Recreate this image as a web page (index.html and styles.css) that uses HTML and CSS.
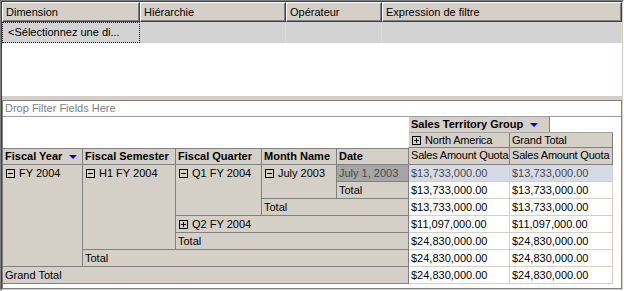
FILE: index.html
```html
<!DOCTYPE html>
<html lang="fr">
<head>
  <meta charset="UTF-8">
  <title>Filtre et tableau croisé</title>
  <link rel="stylesheet" href="styles.css">
</head>
<body>

  <div class="frame">
    <div class="frame-inner">

      <div class="filter-grid">
        <div class="fg-row fg-head">
          <div class="fg-cell c-dim">Dimension</div>
          <div class="fg-cell c-hier">Hiérarchie</div>
          <div class="fg-cell c-op">Opérateur</div>
          <div class="fg-cell c-expr">Expression de filtre</div>
        </div>
        <div class="fg-row fg-data">
          <div class="fg-cell c-dim focus">&lt;Sélectionnez une di...</div>
          <div class="fg-cell c-hier"></div>
          <div class="fg-cell c-op"></div>
          <div class="fg-cell c-expr"></div>
        </div>
      </div>

      <div class="splitter"></div>

      <div class="pivot">
        <div class="drop-filter">Drop Filter Fields Here</div>

        <table class="pt">
          <colgroup>
            <col class="w-year">
            <col class="w-sem">
            <col class="w-qtr">
            <col class="w-month">
            <col class="w-date">
            <col class="w-na">
            <col class="w-gt">
          </colgroup>
          <tr class="r-field">
            <td colspan="5" class="blank"></td>
            <td colspan="2" class="blank field-cell">
              <div class="field-btn">Sales Territory Group <i class="drop"></i></div>
            </td>
          </tr>
          <tr class="r-members">
            <td colspan="5" class="blank"></td>
            <td class="ch"><svg class="xp" viewBox="0 0 9 9"><rect x="0.5" y="0.5" width="8" height="8"/><path d="M2 4.5h5M4.5 2v5"/></svg>North America</td>
            <td class="ch">Grand Total</td>
          </tr>
          <tr class="r-heads">
            <td class="rf">Fiscal Year <i class="drop"></i></td>
            <td class="rf">Fiscal Semester</td>
            <td class="rf">Fiscal Quarter</td>
            <td class="rf">Month Name</td>
            <td class="rf">Date</td>
            <td class="ch">Sales Amount Quota</td>
            <td class="ch">Sales Amount Quota</td>
          </tr>
          <tr>
            <td class="rh" rowspan="6"><svg class="xp" viewBox="0 0 9 9"><rect x="0.5" y="0.5" width="8" height="8"/><path d="M2 4.5h5"/></svg>FY 2004</td>
            <td class="rh" rowspan="5"><svg class="xp" viewBox="0 0 9 9"><rect x="0.5" y="0.5" width="8" height="8"/><path d="M2 4.5h5"/></svg>H1 FY 2004</td>
            <td class="rh" rowspan="3"><svg class="xp" viewBox="0 0 9 9"><rect x="0.5" y="0.5" width="8" height="8"/><path d="M2 4.5h5"/></svg>Q1 FY 2004</td>
            <td class="rh" rowspan="2"><svg class="xp" viewBox="0 0 9 9"><rect x="0.5" y="0.5" width="8" height="8"/><path d="M2 4.5h5"/></svg>July 2003</td>
            <td class="rh sel">July 1, 2003</td>
            <td class="v hl">$13,733,000.00</td>
            <td class="v hl">$13,733,000.00</td>
          </tr>
          <tr>
            <td class="rh">Total</td>
            <td class="v">$13,733,000.00</td>
            <td class="v">$13,733,000.00</td>
          </tr>
          <tr>
            <td class="rh" colspan="2">Total</td>
            <td class="v">$13,733,000.00</td>
            <td class="v">$13,733,000.00</td>
          </tr>
          <tr>
            <td class="rh" colspan="3"><svg class="xp" viewBox="0 0 9 9"><rect x="0.5" y="0.5" width="8" height="8"/><path d="M2 4.5h5M4.5 2v5"/></svg>Q2 FY 2004</td>
            <td class="v">$11,097,000.00</td>
            <td class="v">$11,097,000.00</td>
          </tr>
          <tr>
            <td class="rh" colspan="3">Total</td>
            <td class="v">$24,830,000.00</td>
            <td class="v">$24,830,000.00</td>
          </tr>
          <tr>
            <td class="rh" colspan="4">Total</td>
            <td class="v">$24,830,000.00</td>
            <td class="v">$24,830,000.00</td>
          </tr>
          <tr>
            <td class="rh" colspan="5">Grand Total</td>
            <td class="v">$24,830,000.00</td>
            <td class="v">$24,830,000.00</td>
          </tr>
        </table>
      </div>

    </div>
  </div>

</body>
</html>
```

FILE: styles.css
```css
:root {
  --face: #d4d0c8;
  --shadow: #808080;
  --dark: #404040;
  --line: #a0a0a0;
}

* {
  box-sizing: border-box;
}

body {
  margin: 0;
  font-family: 'Liberation Sans', Arial, sans-serif;
  font-size: 11px;
  color: #000;
  background: #fff;
}

/* sunken outer frame */
.frame {
  width: 624px;
  height: 291px;
  border: 1px solid;
  border-color: var(--shadow) #fff #fff var(--shadow);
}

.frame-inner {
  height: 100%;
  border: 1px solid;
  border-color: var(--dark) var(--face) var(--face) var(--dark);
  display: flex;
  flex-direction: column;
}

/* filter grid */
.filter-grid {
  height: 94px;
  background: #fff;
}

.fg-row {
  display: flex;
}

.fg-cell {
  padding-left: 3px;
  white-space: nowrap;
  overflow: hidden;
}

.c-dim { width: 138px; }
.c-hier { width: 146px; }
.c-op { width: 96px; }
.c-expr { flex: 1; }

.fg-head .fg-cell {
  height: 20px;
  line-height: 19px;
  background: var(--face);
  border-top: 1px solid #fff;
  border-left: 1px solid #fff;
  border-right: 1px solid var(--dark);
  border-bottom: 1px solid var(--dark);
  box-shadow: inset -1px -1px 0 var(--shadow);
}

.fg-data .fg-cell {
  height: 21px;
  line-height: 20px;
  background: #d3d3d3;
  border-right: 1px solid #dcdcdc;
}

.fg-data .focus {
  border: 1px dotted #000;
  line-height: 19px;
  padding-left: 5px;
}

.splitter {
  height: 4px;
  background: var(--face);
}

/* pivot table */
.pivot {
  flex: 1;
  background: #fff;
  border: 1px solid var(--shadow);
}

.drop-filter {
  height: 16px;
  line-height: 15px;
  padding-left: 2px;
  color: var(--shadow);
  border-bottom: 1px solid var(--line);
}

.pt {
  border-collapse: separate;
  border-spacing: 0;
  table-layout: fixed;
  width: 610px;
}

.w-year { width: 80px; }
.w-sem { width: 93px; }
.w-qtr { width: 86px; }
.w-month { width: 75px; }
.w-date { width: 72px; }
.w-na { width: 101px; }
.w-gt { width: 103px; }

.pt td {
  padding: 0 0 0 2px;
  white-space: nowrap;
  overflow: hidden;
  vertical-align: top;
}

.r-field td {
  height: 16px;
}

.r-members td {
  height: 15px;
  line-height: 14px;
}

.r-heads td {
  height: 16px;
  line-height: 15px;
}

.pt td.blank {
  padding: 0;
}

.pt td.field-cell {
  border-bottom: 1px solid var(--line);
}

.field-btn {
  width: 141px;
  height: 15px;
  line-height: 15px;
  padding-left: 2px;
  background: var(--face);
  border-right: 1px solid var(--shadow);
  font-weight: bold;
}

.drop {
  display: inline-block;
  width: 0;
  height: 0;
  margin-left: 4px;
  vertical-align: 1px;
  border-left: 4px solid transparent;
  border-right: 4px solid transparent;
  border-top: 4px solid #0000ff;
}

.ch {
  background: var(--face);
  border-right: 1px solid var(--shadow);
  border-bottom: 1px solid var(--shadow);
  letter-spacing: -0.2px;
}

.rf {
  background: var(--face);
  font-weight: bold;
  border-top: 1px solid var(--shadow);
  border-right: 1px solid var(--shadow);
  border-bottom: 1px solid var(--shadow);
}

.rh {
  height: 17px;
  line-height: 16px;
  background: var(--face);
  border-right: 1px solid var(--shadow);
  border-bottom: 1px solid var(--shadow);
}

.rh.sel {
  background: #a6a6a6;
  color: #4a4a4a;
}

.v {
  height: 17px;
  line-height: 16px;
  border-right: 1px solid var(--face);
  border-bottom: 1px solid var(--face);
}

.v.hl {
  background: #d6dae6;
  color: #4a4a4a;
}

/* expand / collapse box */
.xp {
  display: inline-block;
  width: 9px;
  height: 9px;
  margin: 0 4px 0 1px;
  vertical-align: -1px;
  fill: none;
  stroke: #000;
  stroke-width: 1;
  shape-rendering: crispEdges;
}
```
